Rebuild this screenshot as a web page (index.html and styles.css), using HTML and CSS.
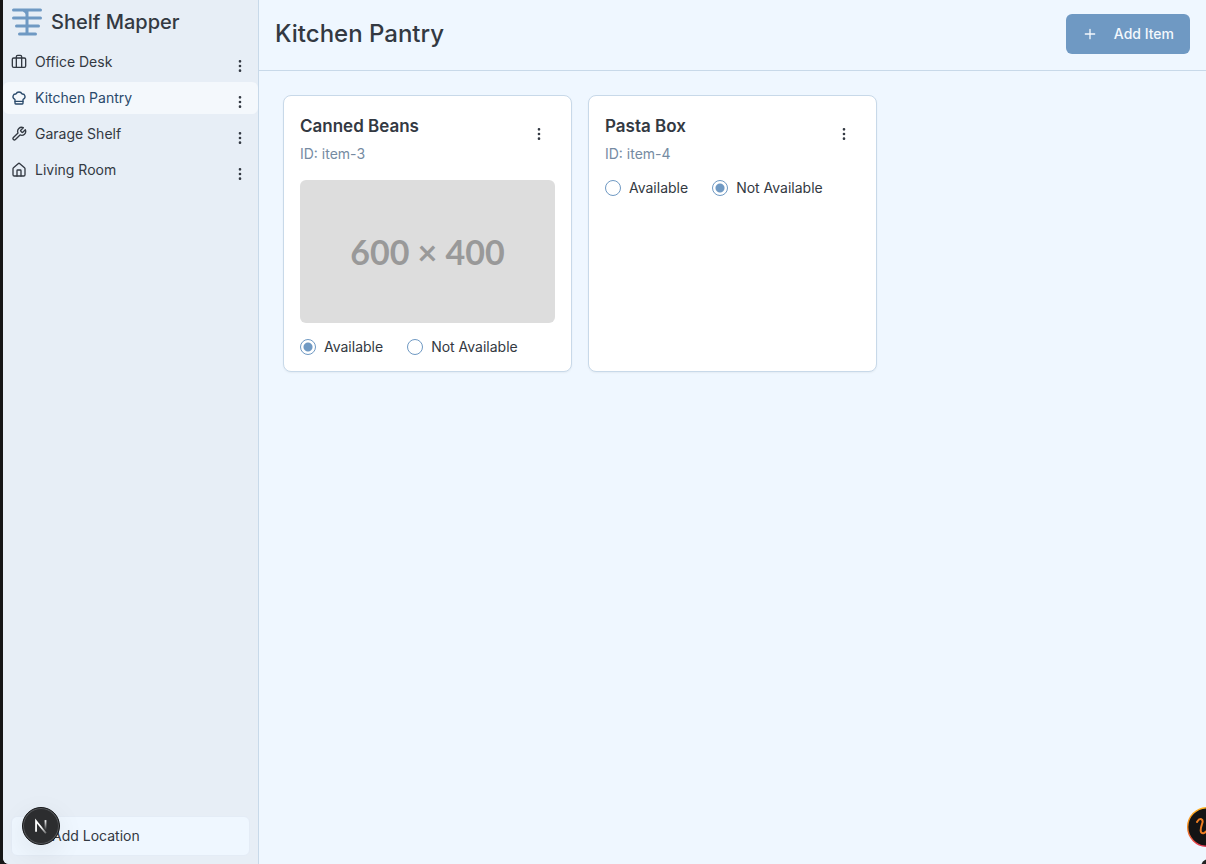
FILE: index.html
```html
<!DOCTYPE html>
<html lang="en">
<head>
<meta charset="utf-8">
<meta name="viewport" content="width=device-width, initial-scale=1">
<title>Shelf Mapper</title>
<link rel="stylesheet" href="styles.css">
</head>
<body>
<svg class="sprite" aria-hidden="true">
  <symbol id="dots" viewBox="0 0 24 24"><circle cx="12" cy="12" r="1"/><circle cx="12" cy="5" r="1"/><circle cx="12" cy="19" r="1"/></symbol>
</svg>
<div class="app">
  <aside class="sidebar">
    <div class="brand">
      <svg class="logo" viewBox="0 0 32 32" aria-hidden="true"><path d="M2.500 4h27M2.500 12h27M5.500 20h22M8.500 28h16M16 4v24M13 4.500q3 1 3 4"/></svg>
      <span class="brand-name">Shelf Mapper</span>
    </div>
    <nav class="locations">
      <div class="location">
        <a class="location-link" href="#office"><svg class="icon" viewBox="0 0 24 24"><path d="M16 20V4a2 2 0 0 0-2-2h-4a2 2 0 0 0-2 2v16"/><rect x="2" y="6" width="20" height="14" rx="2"/></svg>Office Desk</a>
        <button class="more" type="button" aria-label="Office Desk options"><svg class="icon dots"><use href="#dots"/></svg></button>
      </div>
      <div class="location active">
        <a class="location-link" href="#kitchen" aria-current="page"><svg class="icon" viewBox="0 0 24 24"><path d="M17 21a1 1 0 0 0 1-1v-5.350c0-.457.316-.844.727-1.041a4 4 0 0 0-2.134-7.589 5 5 0 0 0-9.186 0 4 4 0 0 0-2.134 7.588c.411.198.727.585.727 1.041V20a1 1 0 0 0 1 1Z"/><path d="M6 17h12"/></svg>Kitchen Pantry</a>
        <button class="more" type="button" aria-label="Kitchen Pantry options"><svg class="icon dots"><use href="#dots"/></svg></button>
      </div>
      <div class="location">
        <a class="location-link" href="#garage"><svg class="icon" viewBox="0 0 24 24"><path d="M14.700 6.300a1 1 0 0 0 0 1.400l1.600 1.600a1 1 0 0 0 1.400 0l3.770-3.770a6 6 0 0 1-7.940 7.940l-6.910 6.910a2.120 2.120 0 0 1-3-3l6.910-6.910a6 6 0 0 1 7.940-7.940l-3.760 3.760z"/></svg>Garage Shelf</a>
        <button class="more" type="button" aria-label="Garage Shelf options"><svg class="icon dots"><use href="#dots"/></svg></button>
      </div>
      <div class="location">
        <a class="location-link" href="#living"><svg class="icon" viewBox="0 0 24 24"><path d="M15 21v-8a1 1 0 0 0-1-1h-4a1 1 0 0 0-1 1v8"/><path d="M3 10a2 2 0 0 1 .709-1.528l7-5.999a2 2 0 0 1 2.582 0l7 5.999A2 2 0 0 1 21 10v9a2 2 0 0 1-2 2H5a2 2 0 0 1-2-2z"/></svg>Living Room</a>
        <button class="more" type="button" aria-label="Living Room options"><svg class="icon dots"><use href="#dots"/></svg></button>
      </div>
    </nav>
    <button class="add-location" type="button">Add Location</button>
  </aside>
  <main class="main">
    <header class="topbar">
      <h1 class="title">Kitchen Pantry</h1>
      <button class="add-item" type="button"><svg class="icon" viewBox="0 0 24 24"><path d="M5 12h14M12 5v14"/></svg>Add Item</button>
    </header>
    <section class="grid">
      <article class="card">
        <div class="card-head">
          <div class="card-text"><h2 class="card-title">Canned Beans</h2><p class="card-id">ID: item-3</p></div>
          <button class="more card-more" type="button" aria-label="Canned Beans options"><svg class="icon dots"><use href="#dots"/></svg></button>
        </div>
        <div class="photo">600 × 400</div>
        <div class="choices">
          <label class="choice"><input class="radio" type="radio" name="item-3" checked>Available</label>
          <label class="choice"><input class="radio" type="radio" name="item-3">Not Available</label>
        </div>
      </article>
      <article class="card">
        <div class="card-head">
          <div class="card-text"><h2 class="card-title">Pasta Box</h2><p class="card-id">ID: item-4</p></div>
          <button class="more card-more" type="button" aria-label="Pasta Box options"><svg class="icon dots"><use href="#dots"/></svg></button>
        </div>
        <div class="choices">
          <label class="choice"><input class="radio" type="radio" name="item-4">Available</label>
          <label class="choice"><input class="radio" type="radio" name="item-4" checked>Not Available</label>
        </div>
      </article>
    </section>
  </main>
</div>
<button class="dev-badge" type="button" aria-label="Developer tools">
  <svg class="dev-mark" viewBox="0 0 40 40"><defs><linearGradient id="fade-a" x1="0" y1="0" x2="1" y2="1"><stop offset=".5" stop-color="#fff"/><stop offset="1" stop-color="#fff" stop-opacity=".3"/></linearGradient><linearGradient id="fade-b" x1="0" y1="0" x2="0" y2="1"><stop offset="0" stop-color="#fff"/><stop offset="1" stop-color="#fff" stop-opacity="0"/></linearGradient></defs><path d="M14.500 26.500V14.500L25.500 28" fill="none" stroke="url(#fade-a)" stroke-width="2"/><rect x="24" y="13.500" width="2" height="11" fill="url(#fade-b)"/></svg>
</button>
<div class="helper-clip">
  <button class="helper" type="button" aria-label="Assistant">
    <svg class="helper-mark" viewBox="0 0 40 40"><defs><linearGradient id="ring" x1="0" y1="0" x2="0" y2="1"><stop offset="0" stop-color="#ffb01f"/><stop offset=".5" stop-color="#f58a1f"/><stop offset="1" stop-color="#e0344f"/></linearGradient></defs><circle cx="20" cy="20" r="19.300" fill="#141414" stroke="url(#ring)" stroke-width="1.400"/><path d="M10 15c3-5 7-3 5 2-2 6-2 10 2 9 5-2 6-8 7-13" fill="none" stroke="#ee7d22" stroke-width="2" stroke-linecap="round"/></svg>
  </button>
  <span class="helper-dot"></span>
</div>
</body>
</html>
```
FILE: styles.css
```css
* { box-sizing: border-box; }
body {
  margin: 0;
  background: #161616;
  color: #333942;
  font: 14px/20px Inter, "Liberation Sans", sans-serif;
}
button { font: inherit; color: inherit; border: 0; background: none; padding: 0; cursor: pointer; }
h1, h2, p { margin: 0; }
.sprite { position: absolute; width: 0; height: 0; }
.icon {
  width: 16px; height: 16px; flex: none;
  fill: none; stroke: currentColor; stroke-width: 2;
  stroke-linecap: round; stroke-linejoin: round;
}
.app {
  display: flex;
  min-height: 100vh;
  margin-left: 3px;
  background: #eff7ff;
  border-bottom-left-radius: 6px;
  overflow: hidden;
}
.sidebar {
  flex: none;
  width: 256px;
  display: flex;
  flex-direction: column;
  background: #e7eef6;
  border-right: 1px solid #c8d9e9;
}
.brand { display: flex; align-items: center; gap: 8px; height: 44px; padding: 0 8px; }
.logo { width: 32px; height: 32px; fill: none; stroke: #6f99c3; stroke-width: 3; stroke-linecap: round; }
.brand-name { font-size: 20px; line-height: 28px; font-weight: 500; }
.locations { display: flex; flex-direction: column; gap: 4px; padding-top: 2px; }
.location { display: flex; height: 32px; padding: 0 8px; border-radius: 6px; }
.location.active { background: #f4f8fc; color: #2a4a6b; }
.location-link { flex: 1; display: flex; align-items: center; gap: 8px; color: inherit; text-decoration: none; }
.more { display: grid; place-items: center; color: #333942; }
.location .more { width: 20px; height: 24px; margin-top: 8px; }
.dots { fill: currentColor; }
.add-location {
  margin: auto 8px 8px;
  height: 40px;
  padding: 0 40px;
  text-align: left;
  background: #eff7ff;
  border: 1px solid #e4ecf6;
  border-radius: 6px;
}
.main { flex: 1; min-width: 0; }
.topbar {
  display: flex;
  align-items: center;
  justify-content: space-between;
  padding: 14px 16px 16px;
  border-bottom: 1px solid #c8d9e9;
}
.title { font-size: 24px; line-height: 32px; font-weight: 500; }
.add-item {
  display: flex;
  align-items: center;
  gap: 16px;
  height: 40px;
  padding: 0 16px;
  border-radius: 6px;
  background: #6f99c3;
  color: #f3f8fd;
  font-weight: 500;
}
.grid {
  display: grid;
  grid-template-columns: repeat(3, minmax(0, 1fr));
  gap: 16px;
  padding: 24px;
}
.card {
  display: flex;
  flex-direction: column;
  gap: 16px;
  padding: 16px;
  background: #fff;
  border: 1px solid #c8d9e9;
  border-radius: 8px;
  box-shadow: 0 1px 2px rgba(0, 0, 0, .05);
}
.card-head { display: flex; justify-content: space-between; align-items: flex-start; }
.card-text { display: grid; gap: 4px; }
.card-title { font-size: 17px; line-height: 28px; font-weight: 600; }
.card-id { color: #758ba2; }
.card-more { width: 32px; height: 32px; margin-top: 6px; }
.photo {
  display: grid;
  place-items: center;
  aspect-ratio: 16 / 9;
  border-radius: 6px;
  background: #ddd;
  color: #999;
  font: 700 34px/44px Lato, sans-serif;
}
.choices { display: flex; gap: 24px; }
.choice { display: flex; align-items: center; gap: 8px; line-height: 16px; }
.radio {
  appearance: none;
  width: 16px; height: 16px; margin: 0;
  border: 1px solid #6f99c3;
  border-radius: 50%;
}
.radio:checked { background: radial-gradient(circle, #6f99c3 4px, transparent 5px); }
.dev-badge {
  position: fixed;
  left: 22px; bottom: 19px;
  width: 38px; height: 38px;
  border-radius: 50%;
  background: #2c2d2f;
  border: 1px solid #17181a;
  box-shadow: inset 0 0 0 1px #55575a, 0 8px 28px rgba(0, 0, 0, .08);
}
.dev-mark { display: block; width: 36px; height: 36px; }
.helper-clip { position: fixed; right: 0; bottom: 0; width: 19px; height: 57px; overflow: hidden; }
.helper { display: block; width: 40px; height: 40px; }
.helper-mark { display: block; width: 40px; height: 40px; }
.helper-dot { position: absolute; left: 14px; top: 52px; width: 16px; height: 16px; border-radius: 50%; background: #222; }
```
